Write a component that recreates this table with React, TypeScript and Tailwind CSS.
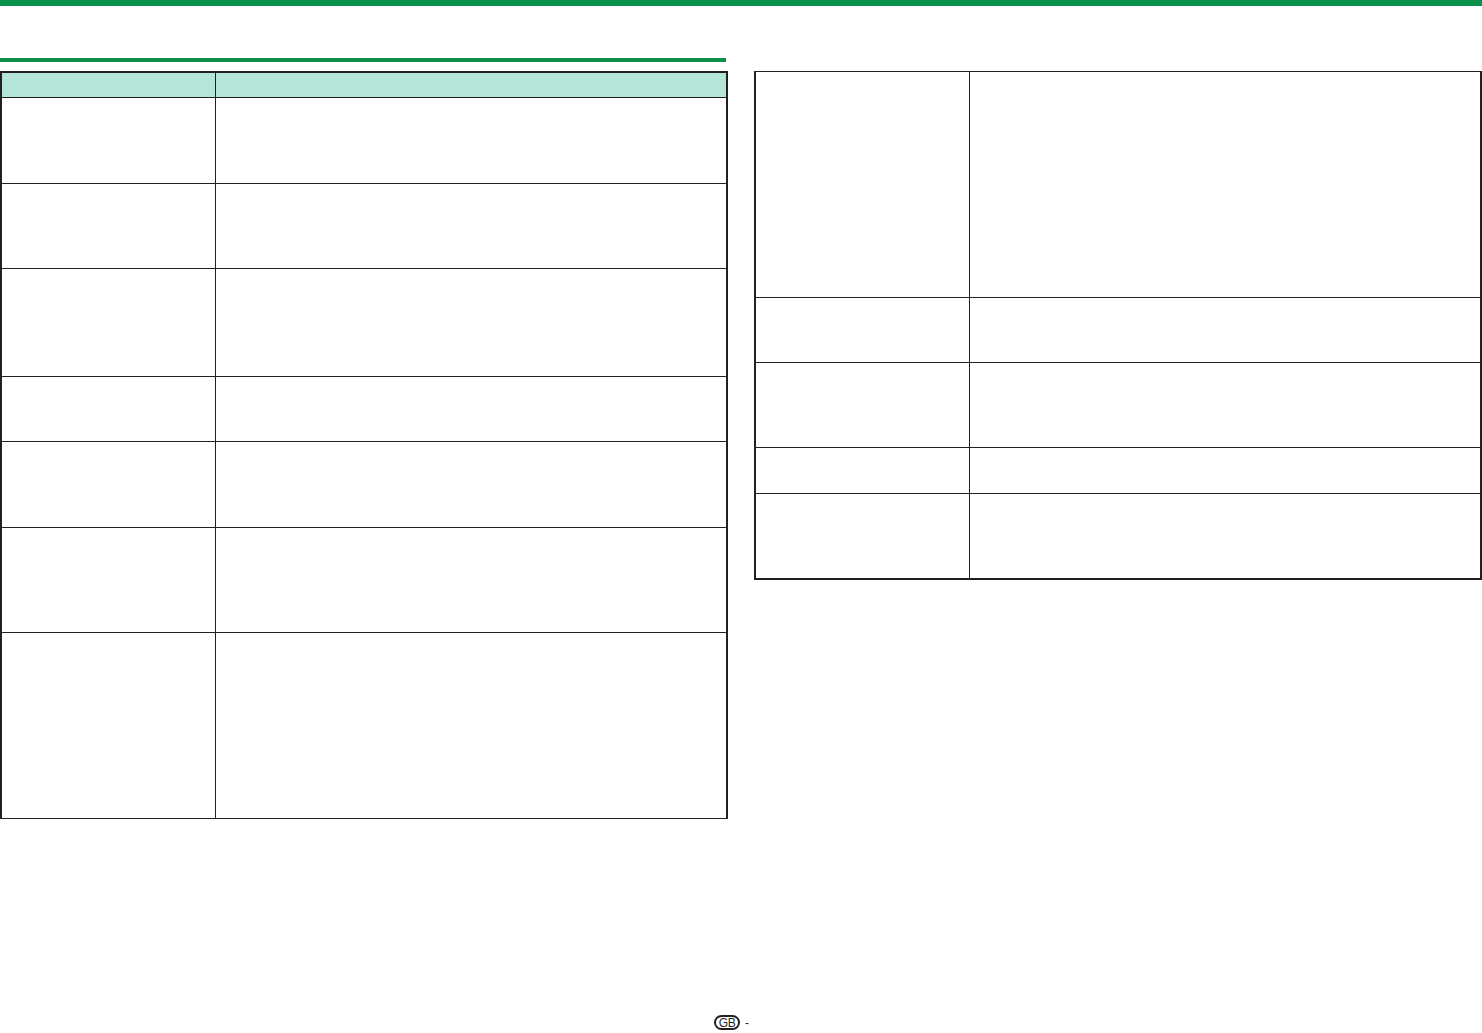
const leftRows = [86, 85, 108, 65, 86, 105];
const rightRows = [226, 65, 85, 46];

function Row({ h, last = false }: { h: number; last?: boolean }) {
  return (
    <div
      className={`flex ${last ? "" : "border-b border-[#231f20]"}`}
      style={{ height: h }}
    >
      <div className="w-[214px] shrink-0 border-r border-[#231f20]" />
      <div className="flex-1" />
    </div>
  );
}

export default function App() {
  return (
    <div className="w-[1482px] h-[1033px] bg-white font-['Liberation_Sans',Arial,sans-serif] text-[#231f20] overflow-hidden">
      <div className="h-[6px] bg-[#0b8f4c]" />

      <div className="flex gap-[26px]">
        {/* left column */}
        <div className="w-[728px]">
          <div className="mt-[52px] h-[4px] w-[726px] bg-[#0b8f4c]" />
          <div className="mt-[9px] border-t-2 border-l-2 border-r-2 border-b border-[#231f20]">
            <div className="flex h-[25px] bg-[#b3e6d9] border-b border-[#231f20]">
              <div className="w-[214px] shrink-0 border-r border-[#231f20]" />
              <div className="flex-1" />
            </div>
            {leftRows.map((h, i) => (
              <Row key={i} h={h} />
            ))}
            <Row h={185} last />
          </div>
        </div>

        {/* right column */}
        <div className="w-[728px]">
          <div className="mt-[65px] border-t border-l-2 border-r-2 border-b-2 border-[#231f20]">
            {rightRows.map((h, i) => (
              <Row key={i} h={h} />
            ))}
            <Row h={84} last />
          </div>
        </div>
      </div>

      <div className="mt-[196px] pl-[714px] flex items-center gap-[5px] text-[12px] leading-none">
        <span className="flex h-[15px] w-[26px] items-center justify-center rounded-full border-2 border-[#231f20] tracking-[-0.5px]">
          GB
        </span>
        <span>-</span>
      </div>
    </div>
  );
}
